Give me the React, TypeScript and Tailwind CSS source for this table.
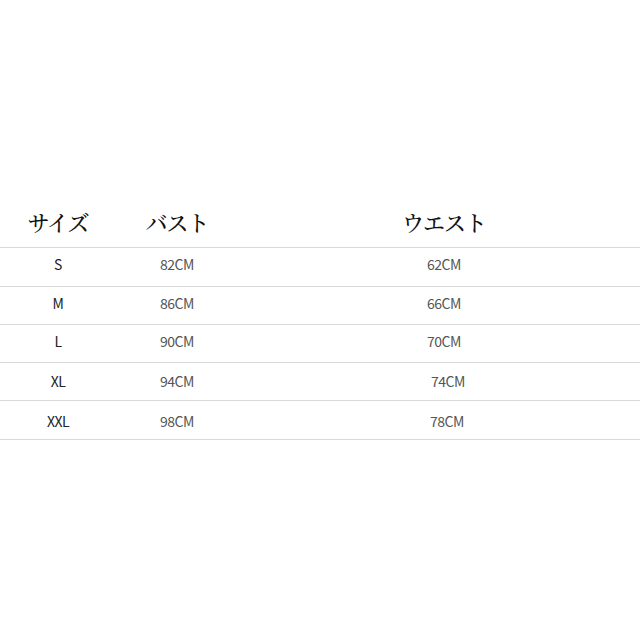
const rows = [
  { size: "S", bust: "82CM", waist: "62CM", h: "h-[39px]", pad: "pb-[5px]", shift: "" },
  { size: "M", bust: "86CM", waist: "66CM", h: "h-[38px]", pad: "pb-[4px]", shift: "" },
  { size: "L", bust: "90CM", waist: "70CM", h: "h-[38px]", pad: "pb-[4px]", shift: "" },
  { size: "XL", bust: "94CM", waist: "74CM", h: "h-[38px]", pad: "pb-0", shift: "pl-[8px]" },
  { size: "XXL", bust: "98CM", waist: "78CM", h: "h-[39px]", pad: "pt-[2px]", shift: "pl-[6px]" },
];

export default function App() {
  return (
    <div className="w-[640px] h-[640px] bg-white pt-[199px] font-['Noto_Sans_CJK_JP',sans-serif]">
      <div className="flex items-center h-[49px] border-b border-[#d9d9d9] text-[22px] tracking-[-1px] font-medium text-[#111] font-['Noto_Serif_CJK_JP','Noto_Sans_CJK_JP',serif]">
        <div className="w-[116px] text-center pb-[4px]">サイズ</div>
        <div className="w-[122px] text-center pb-[4px]">バスト</div>
        <div className="w-[160px] ml-[126px] text-center pb-[4px]">ウエスト</div>
      </div>
      {rows.map((r) => (
        <div
          key={r.size}
          className={`flex items-center ${r.h} ${r.pad} border-b border-[#d9d9d9] text-[14px] tracking-[-0.5px]`}
        >
          <div className="w-[116px] text-center text-[#222]">{r.size}</div>
          <div className="w-[122px] text-center text-[#555]">{r.bust}</div>
          <div className={`w-[160px] ml-[126px] text-center text-[#555] ${r.shift}`}>{r.waist}</div>
        </div>
      ))}
    </div>
  );
}
